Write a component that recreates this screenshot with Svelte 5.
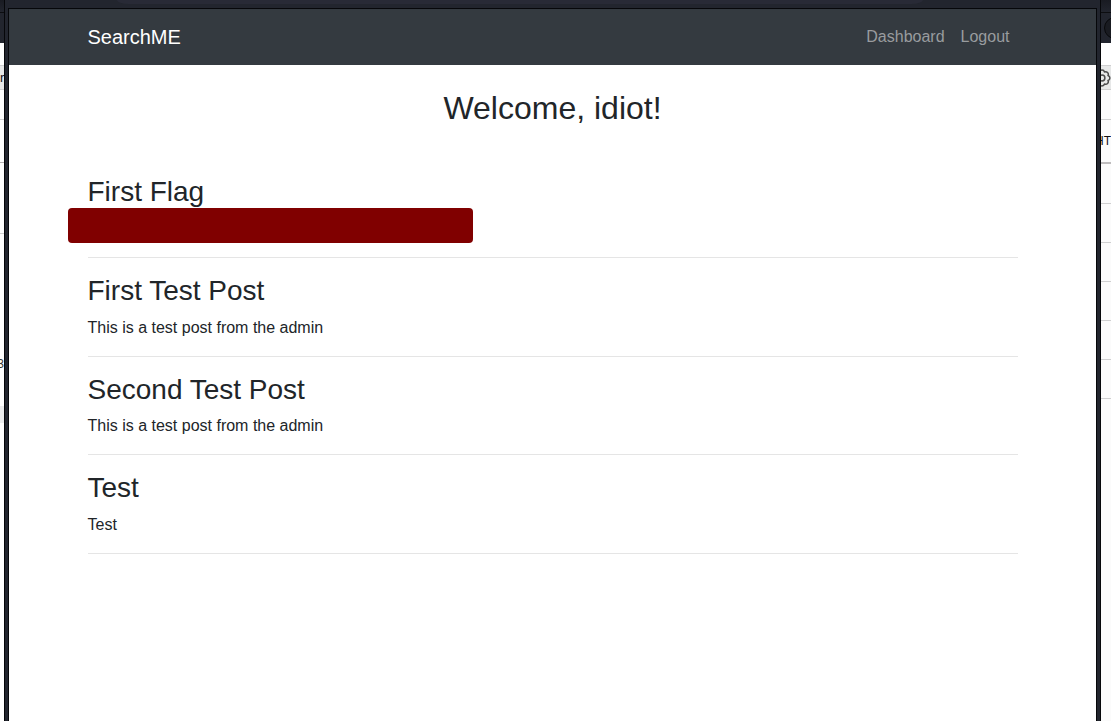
<script>
  const posts = [
    { title: 'First Flag', body: '', redacted: true },
    { title: 'First Test Post', body: 'This is a test post from the admin' },
    { title: 'Second Test Post', body: 'This is a test post from the admin' },
    { title: 'Test', body: 'Test' }
  ];
  const rightRows = [1, 2, 3, 4, 5, 6];
</script>

<div class="desktop">
  <aside class="behind left">
    <div class="chrome top"></div>
    <div class="chrome bar"></div>
    <div class="row gap"></div>
    <div class="row tools"><span>r</span></div>
    <div class="row filters"></div>
    <div class="row head"></div>
    <div class="row block"></div>
    <div class="detail"><span>3</span></div>
    <div class="mark"></div>
    <div class="rest"></div>
  </aside>

  <div class="window">
    <div class="titlebar"><div class="address"></div></div>
    <header>
      <nav class="container">
        <a class="brand" href="#home">SearchME</a>
        <div class="links">
          <a href="#dashboard">Dashboard</a>
          <a href="#logout">Logout</a>
        </div>
      </nav>
    </header>
    <main class="container">
      <h2>Welcome, idiot!</h2>
      {#each posts as post}
        <article>
          <h3>{post.title}</h3>
          <p>{post.body}{#if post.redacted}<span class="redaction"></span>{/if}</p>
        </article>
      {/each}
    </main>
  </div>

  <aside class="behind right">
    <div class="chrome top"></div>
    <div class="chrome bar"><div class="knob"></div></div>
    <div class="row gap"></div>
    <div class="row tools">
      <svg width="18" height="18" viewBox="0 0 18 18" fill="none" stroke="#4b4b4b" stroke-width="1.500" stroke-linejoin="round">
        <path d="M15 6.500A2.600 2.600 0 0 0 11.500 3A2.600 2.600 0 0 0 6.500 3A2.600 2.600 0 0 0 3 6.500A2.600 2.600 0 0 0 3 11.500A2.600 2.600 0 0 0 6.500 15A2.600 2.600 0 0 0 11.500 15A2.600 2.600 0 0 0 15 11.500A2.600 2.600 0 0 0 15 6.500Z" />
        <circle cx="9" cy="9" r="2.900" />
      </svg>
    </div>
    <div class="row filters"></div>
    <div class="row head"><span>HT</span></div>
    {#each rightRows as r (r)}
      <div class="row line"></div>
    {/each}
    <div class="rest"></div>
  </aside>
</div>

<style>
  :global(body) {
    margin: 0;
    background: #fff;
    font-family: "Liberation Sans", Arial, sans-serif;
  }
  .desktop {
    display: grid;
    grid-template-columns: 4px minmax(0, 1fr) 10px;
    min-height: 100vh;
    color: #212529;
    font-size: 16px;
    line-height: 1.5;
  }
  .desktop * {
    box-sizing: border-box;
  }

  /* Slivers of the windows behind */
  .behind {
    display: flex;
    flex-direction: column;
    overflow: hidden;
    background: #fff;
    font-size: 12px;
    line-height: 18px;
    color: #111;
  }
  .behind.right {
    background: #fbfbfb;
  }
  .chrome {
    flex: none;
    background: #22252e;
  }
  .chrome.top {
    height: 13px;
    background: linear-gradient(#191b22, #22252e);
    border-bottom: 1px solid #0c0d10;
  }
  .chrome.bar {
    height: 30px;
    padding: 4px 0 0 3px;
    overflow: hidden;
  }
  .knob {
    width: 22px;
    height: 22px;
    border: 1px solid #08090b;
    border-radius: 50%;
    background: #191b21;
  }
  .row {
    display: flex;
    align-items: center;
    flex: none;
    border-bottom: 1px solid #cfcfd0;
  }
  .row span {
    flex: none;
  }
  .gap {
    height: 23px;
    background: #fff;
  }
  .tools {
    height: 24px;
    background: #e7e8e8;
    font-size: 13px;
  }
  .right .tools,
  .right .head {
    justify-content: flex-end;
  }
  .tools svg {
    flex: none;
  }
  .filters {
    height: 30px;
  }
  .head {
    height: 43px;
    border-bottom-color: #b4b0b1;
  }
  .right .head {
    height: 44px;
    border-bottom: 2px solid #bebcbd;
  }
  .block {
    height: 71px;
  }
  .line {
    height: 39px;
  }
  .right .head + .line {
    height: 40px;
  }
  .detail {
    display: flex;
    justify-content: flex-end;
    height: 172px;
    padding-top: 121px;
    color: #33362e;
  }
  .mark {
    height: 17px;
    background: #ebeced;
  }
  .rest {
    flex: 1;
  }

  /* Front window: dark frame with a black hairline on both sides */
  .window {
    display: flex;
    flex-direction: column;
    margin: 0 1px;
    border: solid #22252e;
    border-width: 0 3px;
    box-shadow: -1px 0 #06070a, 1px 0 #06070a;
    background: linear-gradient(#06070a, #06070a) left / 1px 100% no-repeat,
      linear-gradient(#06070a, #06070a) right / 1px 100% no-repeat, #fff;
  }
  .titlebar {
    height: 9px;
    background: #22252e;
    border-bottom: 1px solid #06070a;
  }
  .address {
    width: 74%;
    height: 4px;
    margin: 0 auto 0 10%;
    border-radius: 0 0 12px 12px / 0 0 4px 4px;
    background: #282a36;
  }
  header {
    background: #343a40;
    box-shadow: inset 1px 0 #06070a, inset -1px 0 #06070a;
  }
  .container {
    width: 100%;
    max-width: 960px;
    margin: 0 auto;
    padding: 0 15px;
  }
  nav {
    display: flex;
    align-items: center;
    justify-content: space-between;
    height: 56px;
  }
  a {
    text-decoration: none;
  }
  .brand {
    color: #fff;
    font-size: 20px;
  }
  .links {
    display: flex;
  }
  .links a {
    padding: 8px;
    color: #999c9f;
  }
  h2,
  h3 {
    margin: 0 0 8px;
    font-weight: 400;
    line-height: 1.2;
  }
  h2 {
    margin: 24px 0 48px;
    font-size: 32px;
    text-align: center;
  }
  h3 {
    font-size: 28px;
  }
  article {
    margin-bottom: 16px;
    padding-bottom: 16px;
    border-bottom: 1px solid #e5e5e5;
  }
  p {
    position: relative;
    min-height: 24px;
    margin: 0;
  }
  .redaction {
    position: absolute;
    top: -9px;
    left: -20px;
    width: 405px;
    height: 35px;
    border-radius: 4px;
    background: #800000;
  }
</style>
